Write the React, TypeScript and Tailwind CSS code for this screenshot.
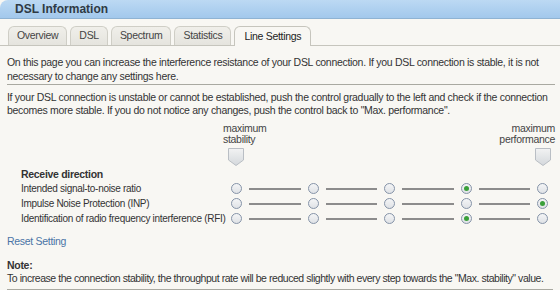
import React from "react";

const font = { fontFamily: '"Liberation Sans", Arial, sans-serif' };

function Radio({ on }: { on?: boolean }) {
  return (
    <span className="relative flex h-[11px] w-[11px] shrink-0 items-center justify-center rounded-full border border-[#8593a8] bg-gradient-to-b from-[#f4f5f6] to-[#dfe2e6]">
      {on && <span className="h-[5px] w-[5px] rounded-full bg-[#3aa03a]" />}
    </span>
  );
}

function RadioRow({ label, sel }: { label: string; sel: number }) {
  return (
    <div className="flex h-[15px] items-center">
      <div className="w-[231px] shrink-0 whitespace-nowrap pl-[21px] text-[10px]">{label}</div>
      <div className="flex w-[317px] items-center">
        {[0, 1, 2, 3, 4].map((i) => (
          <React.Fragment key={i}>
            <Radio on={i === sel} />
            {i < 4 && <span className="mx-[7px] h-[2px] flex-1 bg-[#8c8c8c]" />}
          </React.Fragment>
        ))}
      </div>
    </div>
  );
}

function Marker() {
  return (
    <svg width="16" height="18" viewBox="0 0 16 18">
      <defs>
        <linearGradient id="mg" x1="0" y1="0" x2="0" y2="1">
          <stop offset="0" stopColor="#f2f3f3" />
          <stop offset="1" stopColor="#d4d8dc" />
        </linearGradient>
      </defs>
      <path d="M0.5 0.5 H15.5 V12 L8 17.5 L0.5 12 Z" fill="url(#mg)" stroke="#b9bec4" />
    </svg>
  );
}

const tabs = ["Overview", "DSL", "Spectrum", "Statistics", "Line Settings"];

export default function App() {
  return (
    <div className="h-[290px] w-[560px] overflow-hidden bg-[#f8f7f3] text-[10.5px] tracking-[-0.3px] text-[#333]" style={font}>
      <div className="flex h-[19px] items-center rounded-tl-[8px] border-b border-[#8fb3d3] bg-gradient-to-b from-[#bcd9f3] to-[#a2c8ec] pl-[15px] text-[12px] font-bold tracking-normal text-[#2f3a44]">
        DSL Information
      </div>
      <div className="mt-[7px] flex h-[20px] items-end gap-[3px] border-b border-[#c6c5bd] pl-[8px]">
        {tabs.map((t, i) => (
          <div
            key={t}
            className={
              i === 4
                ? "relative -mb-px flex h-[20px] items-center rounded-t-[6px] border border-b-0 border-[#c6c5bd] bg-[#f8f7f3] px-[9px] text-[#222]"
                : "flex h-[19px] items-center rounded-t-[6px] border border-b-0 border-[#cfcec6] bg-gradient-to-b from-[#f0efea] to-[#e5e4de] px-[8px] text-[#444]"
            }
          >
            {t}
          </div>
        ))}
      </div>
      <div className="px-[7px] pt-[9px] leading-[14px]">
        <p>
          On this page you can increase the interference resistance of your DSL connection. If you DSL connection is stable, it is not necessary to change any settings here.
        </p>
        <div className="mt-[1px] h-px w-[548px] bg-[#a9a9a1]" />
        <p className="mt-[6px] leading-[13px]">
          If your DSL connection is unstable or cannot be established, push the control gradually to the left and check if the connection becomes more stable. If you do not notice any changes, push the control back to "Max. performance".
        </p>
      </div>
      <div className="mt-[6px] flex justify-between pl-[223px] pr-[5px] leading-[11px] text-[#444]">
        <div className="flex flex-col">
          <span>maximum</span>
          <span>stability</span>
          <span className="mt-[3px] pl-[5px]">
            <Marker />
          </span>
        </div>
        <div className="flex flex-col items-end">
          <span>maximum</span>
          <span>performance</span>
          <span className="mt-[3px] pr-[4px]">
            <Marker />
          </span>
        </div>
      </div>
      <div className="mt-[3px] flex h-[12px] items-center pl-[21px] font-bold">Receive direction</div>
      <RadioRow label="Intended signal-to-noise ratio" sel={3} />
      <RadioRow label="Impulse Noise Protection (INP)" sel={4} />
      <RadioRow label="Identification of radio frequency interference (RFI)" sel={3} />
      <div className="mt-[8px] pl-[7px] text-[#4a74a6]">Reset Setting</div>
      <div className="mt-[9px] px-[7px] leading-[13px]">
        <div className="font-bold">Note:</div>
        <div className="whitespace-nowrap tracking-[-0.45px]">To increase the connection stability, the throughput rate will be reduced slightly with every step towards the "Max. stability" value.</div>
      </div>
      <div className="mx-[7px] mt-[4px] h-px bg-[#a9a9a1]" />
    </div>
  );
}
